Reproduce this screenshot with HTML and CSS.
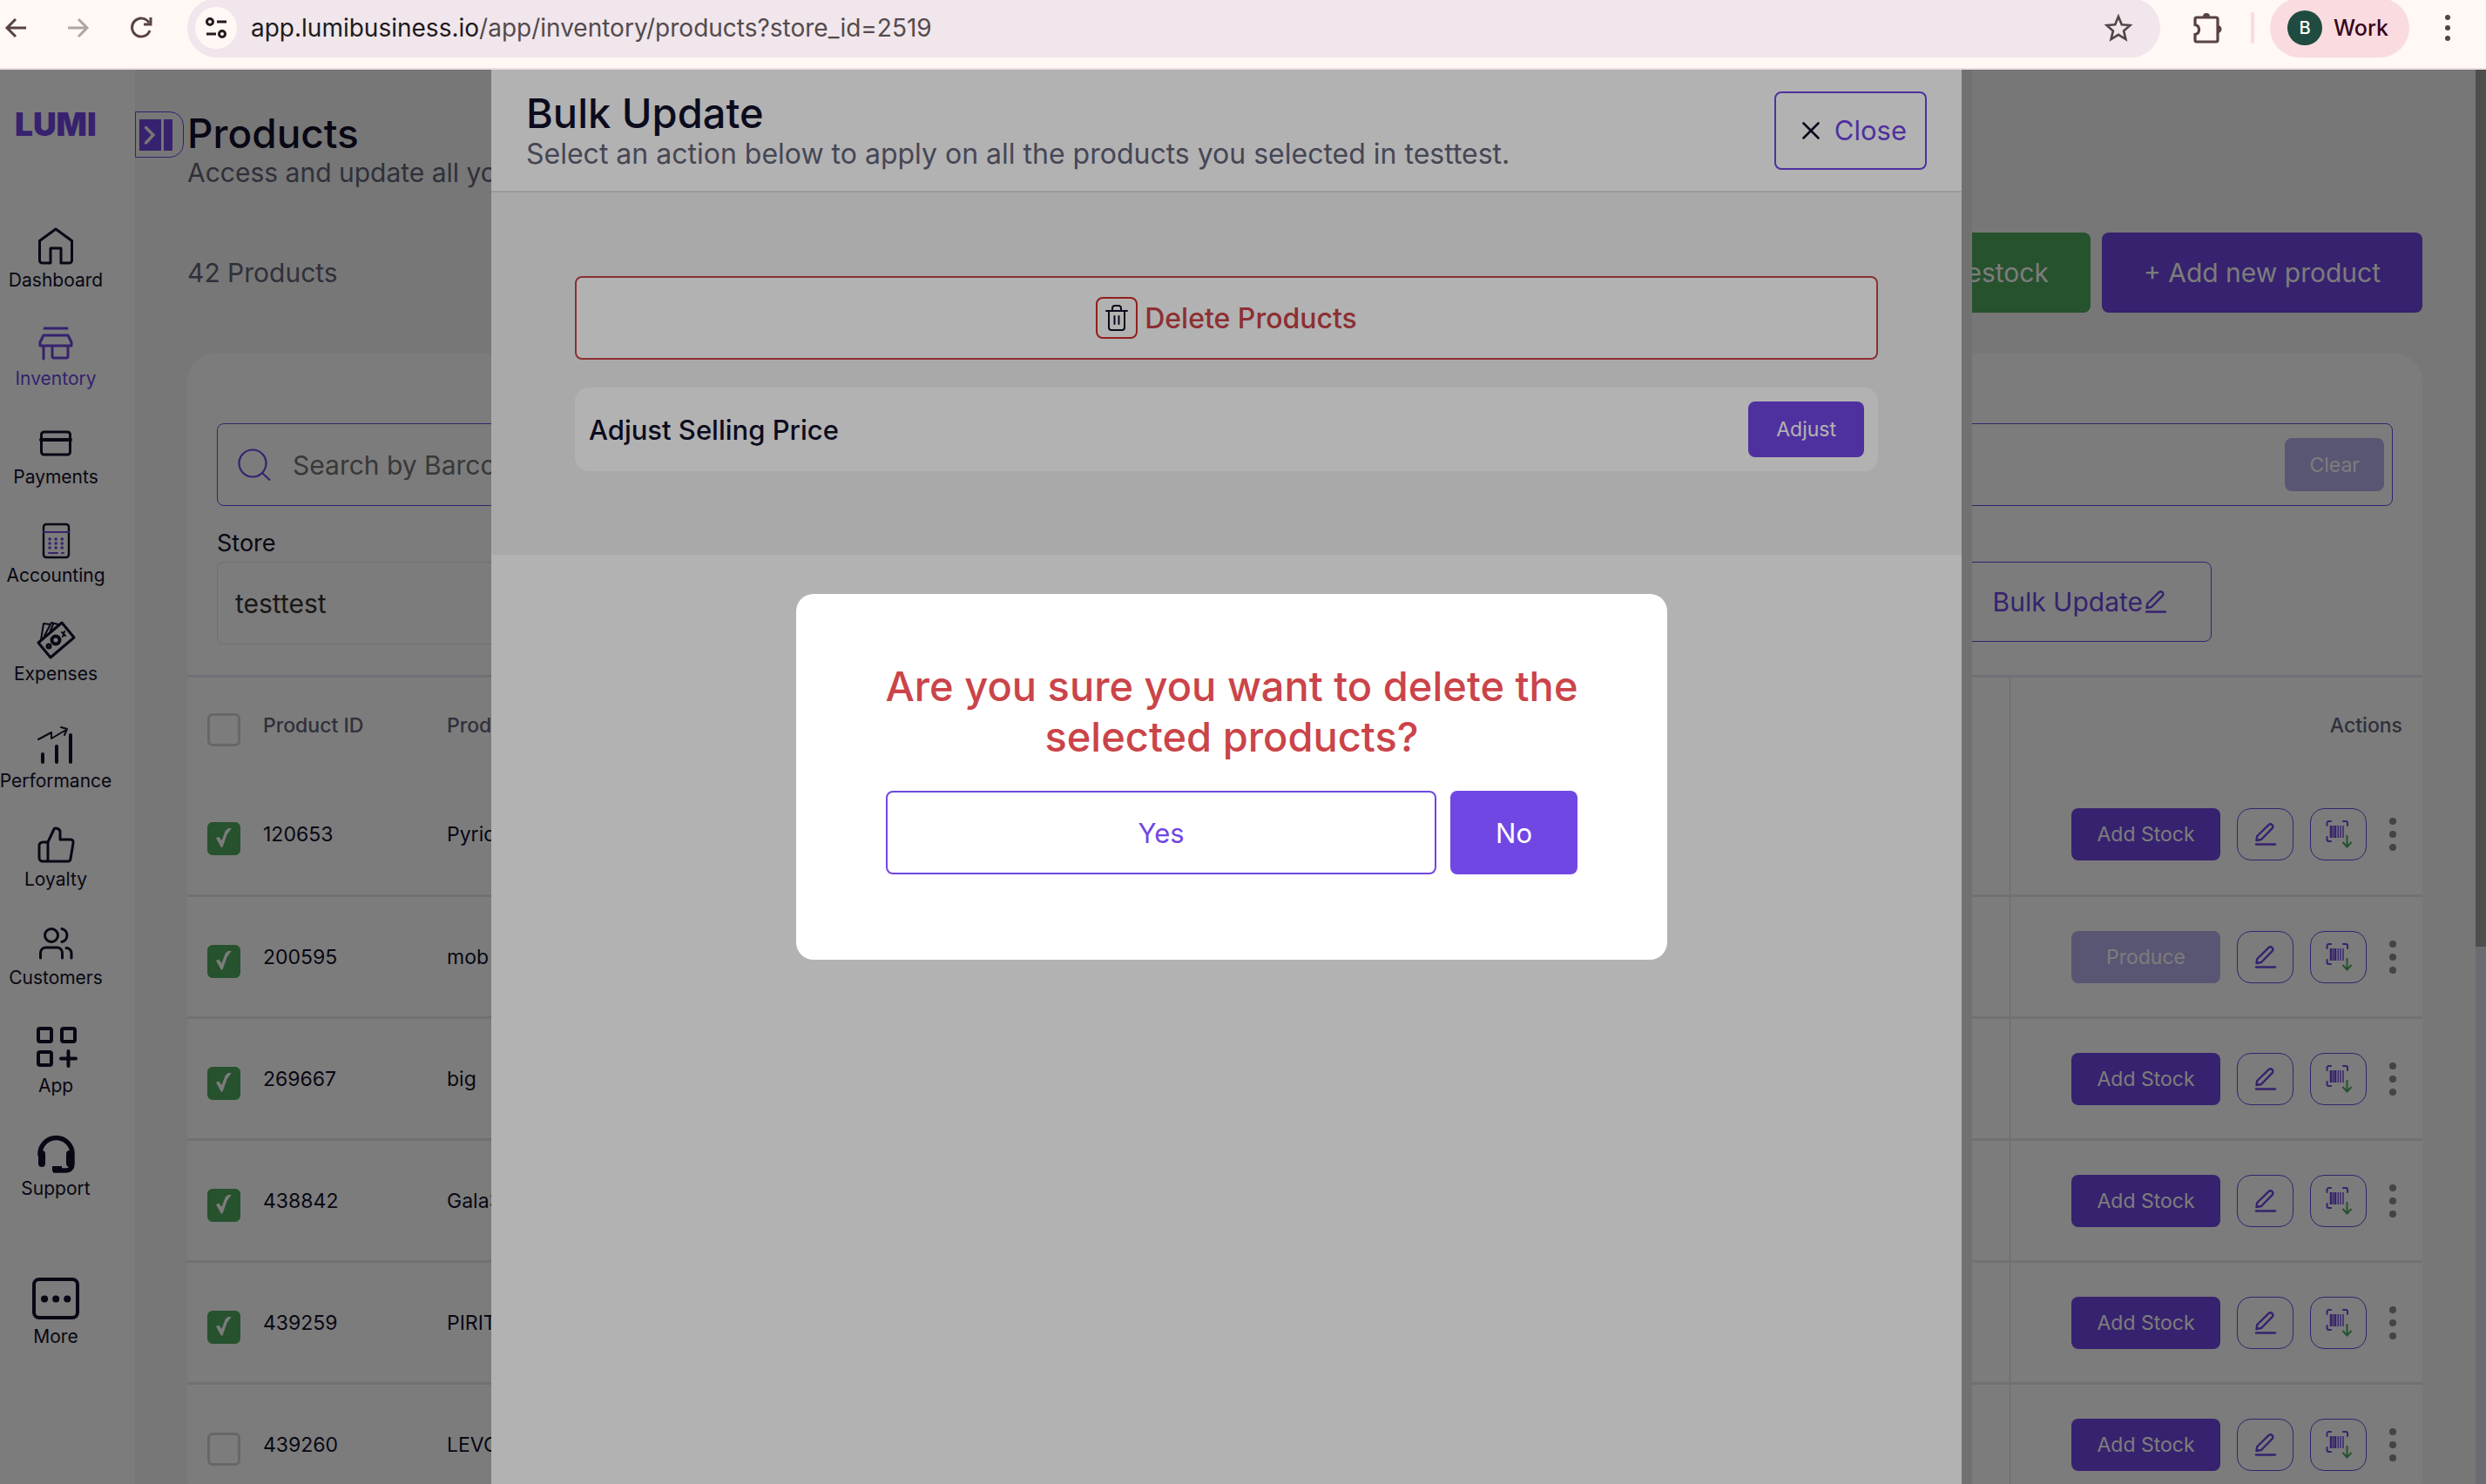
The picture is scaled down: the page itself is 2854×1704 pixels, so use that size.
FILE: index.html
```html
<!DOCTYPE html>
<html lang="en">
<head>
  <meta charset="UTF-8" />
  <meta name="viewport" content="width=device-width, initial-scale=1.0"/>
  <title>Lumi Business - Products</title>
  <link rel="stylesheet" href="styles.css">
</head>
<body>

  <!-- shared icons -->
  <svg class="sprite" aria-hidden="true">
    <symbol id="i-pen" viewBox="0 0 26 26">
      <g fill="none" stroke="currentColor" stroke-width="2.4" stroke-linecap="round" stroke-linejoin="round">
        <path d="M2.500 20l.8-5L16.500 2.200c1.200-1.200 2.800-1.200 4 0s1.200 2.800 0 4L8 19z"/>
        <path d="M2 24.500h22"/>
      </g>
    </symbol>
    <symbol id="i-barcode" viewBox="0 0 30 32">
      <g fill="none" stroke="currentColor" stroke-width="2" stroke-linecap="round">
        <path d="M1.500 6V3a2 2 0 0 1 2-2H6M20 1h3a2 2 0 0 1 2 2v3M1.500 19v3a2 2 0 0 0 2 2H6"/>
      </g>
      <path d="M6 6v14M11 6v14" fill="none" stroke="currentColor" stroke-width="2.600"/>
      <path d="M8.500 6v14M14.300 6v14M17 6v14M20 6v14" fill="none" stroke="currentColor" stroke-width="1.400"/>
      <path d="M24.500 17v13M19.500 25l5 5.500 5-5.500" fill="none" stroke="#4fa95f" stroke-width="2"/>
    </symbol>
    <symbol id="i-dots" viewBox="0 0 10 38">
      <circle cx="5" cy="4" r="4"/><circle cx="5" cy="19" r="4"/><circle cx="5" cy="34" r="4"/>
    </symbol>
  </svg>

  <header class="toolbar">
    <div class="nav-btns">
      <button aria-label="Back"><svg width="26" height="26" viewBox="0 0 26 26"><path d="M25 13H3M13 3L3 13l10 10"/></svg></button>
      <button class="off" aria-label="Forward"><svg width="26" height="26" viewBox="0 0 26 26"><path d="M1 13h22M13 3l10 10-10 10"/></svg></button>
      <button aria-label="Reload"><svg width="26" height="26" viewBox="0 0 26 26"><path d="M23 16a10.500 10.500 0 1 1-1-9M24 1v8h-8"/></svg></button>
    </div>
    <div class="address">
      <span class="site-info">
        <svg width="26" height="26" viewBox="0 0 26 26"><g fill="none" stroke="#241a1c" stroke-width="3"><circle cx="6" cy="6" r="3.500"/><path d="M14 6h11M2 20h11"/><circle cx="20" cy="20" r="3.500"/></g></svg>
      </span>
      <span class="url"><b>app.lumibusiness.io</b>/app/inventory/products?store_id=2519</span>
      <svg class="star" width="32" height="32" viewBox="0 0 32 32"><path d="M16 3l3.800 9.200 9.700.8-7.400 6.400 2.300 9.600L16 23.800 7.600 29l2.300-9.600L2.500 13l9.700-.8z" fill="none" stroke="#4f4548" stroke-width="2.600"/></svg>
    </div>
    <svg class="puzzle" width="34" height="36" viewBox="0 0 34 36"><path d="M5 6h22a2 2 0 0 1 2 2v24a2 2 0 0 1-2 2H5a2 2 0 0 1-2-2v-6.500a5.600 5.600 0 0 0 0-11V8a2 2 0 0 1 2-2z" fill="none" stroke="#584145" stroke-width="3.200"/><path d="M12 5a4 4 0 0 1 8 0zM29 15a4.500 4.500 0 0 1 0 9z" fill="#584145"/></svg>
    <span class="bar-line"></span>
    <button class="profile"><span class="avatar">B</span>Work</button>
    <button class="menu" aria-label="Menu"><svg width="6" height="32" viewBox="0 0 6 32"><circle cx="3" cy="4" r="3"/><circle cx="3" cy="16" r="3"/><circle cx="3" cy="28" r="3"/></svg></button>
  </header>

  <div class="viewport">
    <div class="app">

      <nav class="sidebar">
        <div class="logo">LUMI</div>
        <a href="#">
          <svg width="48" height="48" viewBox="0 0 48 48"><path d="M5.500 18.500L24 5l18.500 13.500V41a3 3 0 0 1-3 3H30V27H18v17H8.500a3 3 0 0 1-3-3z"/></svg>
          Dashboard
        </a>
        <a href="#" class="active">
          <svg width="48" height="48" viewBox="0 0 48 48"><path d="M11 6h26M10 14h28l4 8v4H6v-4zM10 26v15M20 26v12a2 2 0 0 0 2 2h14a2 2 0 0 0 2-2V26"/></svg>
          Inventory
        </a>
        <a href="#">
          <svg width="48" height="48" viewBox="0 0 48 48"><rect x="7.500" y="12" width="33" height="26" rx="3"/><path d="M7 21h34" stroke-width="4"/></svg>
          Payments
        </a>
        <a href="#">
          <svg width="48" height="48" viewBox="0 0 48 48"><rect x="10" y="5" width="29" height="38" rx="3" stroke-width="2.400"/><g class="violet"><path d="M10 14h29" stroke-width="2"/><path d="M17 22h17M17 27h17M17 32h17" stroke-width="3.400" stroke-dasharray="0.1 7"/><path d="M16 38h10M31 38h2" stroke-width="2"/></g></svg>
          Accounting
        </a>
        <a href="#">
          <svg width="48" height="48" viewBox="0 0 48 48"><path d="M4 28L31 5l14 17-27 23z" /><path d="M7 25L10 6l8 1M11 20l8-15 8 2M18 14l3-7" stroke-width="2"/><circle cx="24" cy="25" r="4.500" stroke-width="4"/><circle cx="16" cy="32" r="2" stroke-width="3"/><path d="M31 16l4 4M34 15l-2 6" stroke-width="2"/></svg>
          Expenses
        </a>
        <a href="#" class="tall">
          <svg width="48" height="48" viewBox="0 0 48 48"><path d="M9 33v9M25 24v18M41 11v31" stroke-width="4"/><path d="M4 16l15-8v7l17-10M30 2l7 2-3 7" stroke-width="2"/></svg>
          Performance
        </a>
        <a href="#">
          <svg width="48" height="48" viewBox="0 0 48 48"><path d="M15 21L22 6c1-2 8-1 7 5v7h12a3 3 0 0 1 3 4l-3 18a3 3 0 0 1-3 3H9a4 4 0 0 1-4-4V25a4 4 0 0 1 4-4zM15 21v22"/></svg>
          Loyalty
        </a>
        <a href="#">
          <svg width="48" height="48" viewBox="0 0 48 48"><circle cx="19" cy="15" r="7.500"/><path d="M6.500 41v-6a6 6 0 0 1 6-6h13a6 6 0 0 1 6 6v6M31 7.500a7.700 7.700 0 0 1 0 15M36 29.500a6 6 0 0 1 6 6V41"/></svg>
          Customers
        </a>
        <a href="#" class="low">
          <svg width="54" height="54" viewBox="0 0 54 54"><g stroke-width="4"><rect x="7" y="4" width="15" height="15" rx="2"/><rect x="34" y="4" width="15" height="15" rx="2"/><rect x="7" y="31" width="15" height="15" rx="2"/><path d="M41.500 30v17M33 38.500h17"/></g></svg>
          App
        </a>
        <a href="#" class="low">
          <svg width="48" height="48" viewBox="0 0 48 48"><path d="M6 26v-2a18.500 18.500 0 0 1 37 0v12a7 7 0 0 1-7 7H21" stroke-width="5.500" stroke-linecap="butt"/><path d="M8 24v11M40 24v11" stroke-width="8"/><path d="M20 41h11" stroke-width="6" stroke-linecap="butt"/></svg>
          Support
        </a>
        <a href="#" class="more">
          <svg width="54" height="54" viewBox="0 0 54 54"><rect x="2" y="4" width="50" height="44" rx="6" stroke-width="4"/><path d="M14 26.500h27" stroke-width="8" stroke-dasharray="0.100 13"/></svg>
          More
        </a>
      </nav>

      <main class="page">
        <div class="page-head">
          <button class="toggle" aria-label="Expand sidebar"><svg width="38" height="36" viewBox="0 0 38 36"><path d="M0 0h25v36H0zM28 0h10v36H28z" fill="#7047e3"/><path d="M7.500 9.500L16 18l-8.500 9" fill="none" stroke="#f5f5f5" stroke-width="3.400" stroke-linecap="round"/></svg></button>
          <div>
            <h1>Products</h1>
            <p>Access and update all your products</p>
          </div>
        </div>

        <div class="page-body">
          <div class="summary">
            <span>42 Products</span>
            <button class="btn green">Restock</button>
            <button class="btn">+ Add new product</button>
          </div>

          <section class="card">
            <div class="filters">
              <div class="search">
                <svg width="38" height="38" viewBox="0 0 38 38"><g fill="none" stroke="#7047e3" stroke-width="2.200"><circle cx="17" cy="17" r="15.500"/><path d="M28 28l9 8.500"/></g></svg>
                <input type="text" aria-label="Search products" placeholder="Search by Barcode, Name or Product ID">
                <button class="btn small faded">Clear</button>
              </div>
              <label for="store">Store</label>
              <div class="filter-row">
                <select id="store"><option>testtest</option></select>
                <button class="btn outline thin">Bulk Update<svg width="26" height="26"><use href="#i-pen"/></svg></button>
              </div>
            </div>

            <table>
              <thead>
                <tr>
                  <th class="col-check"><input type="checkbox" aria-label="Select all"></th>
                  <th class="col-id">Product ID</th>
                  <th>Product Name</th>
                  <th class="col-actions">Actions</th>
                </tr>
              </thead>
              <tbody>
                <tr>
                  <td class="col-check"><input type="checkbox" aria-label="Select 120653" checked></td>
                  <td>120653</td>
                  <td>Pyridoxine</td>
                  <td class="col-actions"><div class="actions">
                    <button class="btn small">Add Stock</button>
                    <button class="icon-btn" aria-label="Edit"><svg width="26" height="26"><use href="#i-pen"/></svg></button>
                    <button class="icon-btn" aria-label="Barcode"><svg width="30" height="32"><use href="#i-barcode"/></svg></button>
                    <button class="dots" aria-label="More"><svg width="10" height="38"><use href="#i-dots"/></svg></button>
                  </div></td>
                </tr>
                <tr>
                  <td class="col-check"><input type="checkbox" aria-label="Select 200595" checked></td>
                  <td>200595</td>
                  <td>mob</td>
                  <td class="col-actions"><div class="actions">
                    <button class="btn small faded">Produce</button>
                    <button class="icon-btn" aria-label="Edit"><svg width="26" height="26"><use href="#i-pen"/></svg></button>
                    <button class="icon-btn" aria-label="Barcode"><svg width="30" height="32"><use href="#i-barcode"/></svg></button>
                    <button class="dots" aria-label="More"><svg width="10" height="38"><use href="#i-dots"/></svg></button>
                  </div></td>
                </tr>
                <tr>
                  <td class="col-check"><input type="checkbox" aria-label="Select 269667" checked></td>
                  <td>269667</td>
                  <td>big</td>
                  <td class="col-actions"><div class="actions">
                    <button class="btn small">Add Stock</button>
                    <button class="icon-btn" aria-label="Edit"><svg width="26" height="26"><use href="#i-pen"/></svg></button>
                    <button class="icon-btn" aria-label="Barcode"><svg width="30" height="32"><use href="#i-barcode"/></svg></button>
                    <button class="dots" aria-label="More"><svg width="10" height="38"><use href="#i-dots"/></svg></button>
                  </div></td>
                </tr>
                <tr>
                  <td class="col-check"><input type="checkbox" aria-label="Select 438842" checked></td>
                  <td>438842</td>
                  <td>Gala3</td>
                  <td class="col-actions"><div class="actions">
                    <button class="btn small">Add Stock</button>
                    <button class="icon-btn" aria-label="Edit"><svg width="26" height="26"><use href="#i-pen"/></svg></button>
                    <button class="icon-btn" aria-label="Barcode"><svg width="30" height="32"><use href="#i-barcode"/></svg></button>
                    <button class="dots" aria-label="More"><svg width="10" height="38"><use href="#i-dots"/></svg></button>
                  </div></td>
                </tr>
                <tr>
                  <td class="col-check"><input type="checkbox" aria-label="Select 439259" checked></td>
                  <td>439259</td>
                  <td>PIRITON</td>
                  <td class="col-actions"><div class="actions">
                    <button class="btn small">Add Stock</button>
                    <button class="icon-btn" aria-label="Edit"><svg width="26" height="26"><use href="#i-pen"/></svg></button>
                    <button class="icon-btn" aria-label="Barcode"><svg width="30" height="32"><use href="#i-barcode"/></svg></button>
                    <button class="dots" aria-label="More"><svg width="10" height="38"><use href="#i-dots"/></svg></button>
                  </div></td>
                </tr>
                <tr>
                  <td class="col-check"><input type="checkbox" aria-label="Select 439260"></td>
                  <td>439260</td>
                  <td>LEVOTHYROXINE</td>
                  <td class="col-actions"><div class="actions">
                    <button class="btn small">Add Stock</button>
                    <button class="icon-btn" aria-label="Edit"><svg width="26" height="26"><use href="#i-pen"/></svg></button>
                    <button class="icon-btn" aria-label="Barcode"><svg width="30" height="32"><use href="#i-barcode"/></svg></button>
                    <button class="dots" aria-label="More"><svg width="10" height="38"><use href="#i-dots"/></svg></button>
                  </div></td>
                </tr>
              </tbody>
            </table>
          </section>
        </div>
      </main>

      <div class="scrollbar"><div class="thumb"></div></div>
    </div>

    <div class="overlay">
      <div class="drawer">
        <div class="drawer-main">
          <div class="drawer-head">
            <div>
              <h2>Bulk Update</h2>
              <p>Select an action below to apply on all the products you selected in testtest.</p>
            </div>
            <button class="btn outline close"><svg width="20" height="20" viewBox="0 0 20 20"><path d="M1.500 1.500l17 17M18.500 1.500l-17 17" stroke="#12102b" stroke-width="2.600" stroke-linecap="round"/></svg>Close</button>
          </div>
          <div class="drawer-body">
            <button class="btn delete">
              <span class="trash"><svg width="26" height="30" viewBox="0 0 26 30"><g fill="none" stroke="#12102b" stroke-width="2" stroke-linecap="round" stroke-linejoin="round"><path d="M1 7h24M4 7v19a3 3 0 0 0 3 3h12a3 3 0 0 0 3-3V7M8 6V4a3 3 0 0 1 3-3h4a3 3 0 0 1 3 3v2M10.500 13v9M15.500 13v9"/></g></svg></span>
              Delete Products
            </button>
            <div class="adjust">
              <span>Adjust Selling Price</span>
              <button class="btn small">Adjust</button>
            </div>
          </div>
        </div>
        <div class="drawer-scroll"></div>
      </div>
    </div>

    <div class="overlay center">
      <div class="confirm" role="dialog" aria-labelledby="confirmTitle">
        <h2 id="confirmTitle">Are you sure you want to delete the selected products?</h2>
        <div class="confirm-btns">
          <button class="btn outline yes">Yes</button>
          <button class="btn">No</button>
        </div>
      </div>
    </div>
  </div>

</body>
</html>
```
FILE: styles.css
```css
* {
  box-sizing: border-box;
}

body {
  margin: 0;
  height: 100vh;
  display: flex;
  flex-direction: column;
  overflow: hidden;
  font-family: Inter, "Liberation Sans", sans-serif;
  font-size: 30px;
  color: #12102b;
}

h1, h2, p {
  margin: 0;
}

h1, h2 {
  font-size: 47px;
  font-weight: 500;
  line-height: 58px;
}

p {
  line-height: 40px;
  color: #65657a;
}

button {
  padding: 0;
  border: none;
  background: none;
  font: inherit;
  color: inherit;
  cursor: pointer;
}

svg {
  display: block;
  flex: none;
}

.sprite {
  position: absolute;
  width: 0;
  height: 0;
}

/* browser bar */
.toolbar {
  flex: none;
  display: flex;
  align-items: center;
  height: 80px;
  padding: 0 41px 14px 5px;
  border-bottom: 2px solid #f3dde0;
  background: #fff8f5;
  font-size: 28px;
}

.nav-btns {
  display: flex;
  gap: 46px;
  width: 210px;
}

.nav-btns path {
  fill: none;
  stroke: #584145;
  stroke-width: 3;
}

.nav-btns .off path {
  stroke: #b0a5a5;
}

.address {
  flex: 1;
  display: flex;
  align-items: center;
  height: 68px;
  padding: 0 32px 0 9px;
  border-radius: 34px;
  background: #f0e6eb;
}

.site-info {
  display: flex;
  align-items: center;
  justify-content: center;
  width: 48px;
  height: 48px;
  margin-right: 16px;
  border-radius: 50%;
  background: #fff8f5;
}

.url {
  flex: 1;
  color: #544a4d;
}

.url b {
  font-weight: 400;
  color: #201a1b;
}

.puzzle {
  margin-left: 37px;
}

.bar-line {
  width: 4px;
  height: 36px;
  margin: 0 18px 0 33px;
  border-radius: 2px;
  background: #f9dbe0;
}

.profile {
  display: flex;
  align-items: center;
  gap: 13px;
  height: 68px;
  padding: 0 24px 0 20px;
  border-radius: 34px;
  background: #f9dbe0;
  color: #35061a;
  font-weight: 500;
  font-size: 25px;
}

.avatar {
  width: 40px;
  height: 40px;
  border-radius: 50%;
  background: #1f4b40;
  color: #fff;
  font-size: 20px;
  line-height: 40px;
}

.menu {
  margin-left: 41px;
  fill: #584145;
}

/* app */
.viewport {
  position: relative;
  flex: 1;
  min-height: 0;
  overflow: hidden;
}

.app {
  display: flex;
  height: 100%;
  overflow: hidden;
  background: #f5f5f5;
}

.sidebar {
  flex: none;
  display: flex;
  flex-direction: column;
  gap: 35px;
  width: 155px;
  padding: 43px 27px 0 0;
  background: #fff;
  font-size: 21px;
  line-height: 28px;
}

.logo {
  height: 100px;
  padding-left: 17px;
  color: #7047e3;
  font-size: 37px;
  font-weight: 900;
  line-height: 40px;
}

.sidebar a {
  display: flex;
  flex-direction: column;
  align-items: center;
  gap: 2px;
  color: #12102b;
  text-decoration: none;
}

.sidebar .active {
  color: #7047e3;
}

.sidebar svg {
  fill: none;
  stroke: currentColor;
  stroke-width: 3;
  stroke-linecap: round;
  stroke-linejoin: round;
}

.violet {
  stroke: #7047e3;
}

.sidebar .tall {
  margin-top: 10px;
}

.sidebar .low {
  margin-top: 5px;
}

.sidebar .more {
  margin-top: 51px;
}

.page {
  flex: 1;
  min-width: 0;
}

.page-head {
  display: flex;
  align-items: flex-start;
  gap: 4px;
  padding-top: 48px;
}

.page-head h1 {
  font-size: 46px;
  line-height: 50px;
}

.toggle {
  width: 56px;
  height: 53px;
  padding-left: 4px;
  border: 1px solid #7047e3;
  border-radius: 0 16px 16px 0;
}

.page-body {
  padding: 49px 61px 0 60px;
}

.summary {
  display: flex;
  align-items: center;
  gap: 13px;
  margin-bottom: 47px;
}

.summary span {
  flex: 1;
  color: #65657a;
}

.btn {
  height: 92px;
  padding: 0 48px;
  border-radius: 8px;
  background: #7047e3;
  color: #fff;
  font-size: 30px;
}

.btn.green {
  background: #4fa95f;
}

.btn.outline {
  border: 2px solid #7047e3;
  background: none;
  color: #7047e3;
}

.btn.thin {
  display: flex;
  align-items: center;
  gap: 2px;
  padding: 0 50px;
  border-width: 1px;
}

.btn.small {
  height: 64px;
  padding: 0 32px;
  font-size: 23px;
}

.btn.faded {
  background: #b8b0ef;
}

.card {
  border-radius: 32px;
  background: #fff;
}

.filters {
  padding: 80px 34px 35px;
}

.search {
  display: flex;
  align-items: center;
  gap: 25px;
  height: 95px;
  padding: 0 9px 0 23px;
  border: 1px solid #7047e3;
  border-radius: 8px;
}

.search input {
  flex: 1;
  padding: 0;
  border: none;
  outline: none;
  background: none;
  font: inherit;
}

.search input::placeholder {
  color: #757575;
}

.search .btn {
  height: 61px;
  padding: 0 28px;
}

.filters label {
  display: block;
  padding: 25px 0 3px;
  font-size: 27px;
  line-height: 36px;
}

.filter-row {
  display: flex;
  gap: 24px;
  align-items: flex-start;
}

.filter-row select {
  flex: 1;
  height: 95px;
  padding: 0 20px;
  border: 1px solid #e2e2e2;
  border-radius: 8px;
  background: none;
  color: #333;
  font: inherit;
  appearance: none;
}

.filter-row .btn {
  margin-right: 208px;
}

table {
  width: 100%;
  border-collapse: collapse;
  border-top: 3px solid #e5e9f3;
  font-size: 23px;
  text-align: left;
}

th {
  height: 112px;
  padding: 0;
  color: #65657a;
  font-weight: 500;
}

td {
  height: 140px;
  padding: 0;
  border-bottom: 3px solid #e5e9f0;
}

.col-check {
  width: 87px;
  padding: 10px 0 0 23px;
}

.col-id {
  width: 211px;
}

.col-actions {
  width: 474px;
  padding-right: 23px;
  border-left: 1px solid #d8d8d8;
  text-align: right;
}

input[type="checkbox"] {
  display: block;
  width: 38px;
  height: 38px;
  margin: 0;
  border: 3px solid #d4d4d4;
  border-radius: 6px;
  appearance: none;
}

input[type="checkbox"]:checked {
  border-color: #4fa95f;
  background: #4fa95f;
}

input[type="checkbox"]:checked::before {
  content: "";
  display: block;
  width: 18px;
  height: 22px;
  margin: 4px 0 0 7px;
  background: #fff;
  clip-path: polygon(0 52%, 18% 46%, 36% 66%, 60% 14%, 80% 0, 100% 0, 70% 34%, 42% 100%, 32% 100%);
}

.actions {
  display: flex;
  align-items: center;
  justify-content: flex-end;
  gap: 19px;
  padding-right: 6px;
}

.actions .btn {
  width: 171px;
  height: 60px;
  padding: 0;
}

.icon-btn {
  display: flex;
  align-items: center;
  justify-content: center;
  width: 65px;
  height: 60px;
  border: 1px solid #7047e3;
  border-radius: 16px;
  color: #7047e3;
}

.dots {
  padding-left: 6px;
  fill: #8a8a95;
}

.scrollbar {
  flex: none;
  width: 12px;
  background: #dfdde8;
}

.thumb {
  height: 62%;
  background: #a1a1a1;
}

/* drawer and dialog */
.overlay {
  position: absolute;
  inset: 0;
  display: flex;
  justify-content: center;
  padding-right: 26px;
  background: rgba(0, 0, 0, 0.3);
}

.overlay.center {
  align-items: center;
}

.drawer {
  display: flex;
  width: 1700px;
  max-width: 100%;
  background: #fff;
}

.drawer-main {
  flex: 1;
}

.drawer-scroll {
  width: 12px;
  background: #a3a3a3;
}

.drawer-head {
  display: flex;
  align-items: center;
  justify-content: space-between;
  height: 141px;
  padding: 0 40px;
  border-bottom: 2px solid #dcdcdc;
}

.drawer-head h2 {
  line-height: 54px;
}

.drawer-head p {
  font-size: 32px;
}

.btn.close {
  display: flex;
  align-items: center;
  gap: 17px;
  height: 90px;
  padding: 0 21px 0 30px;
  font-size: 31px;
}

.drawer-body {
  display: flex;
  flex-direction: column;
  gap: 32px;
  padding: 96px;
  background: #f2f2f2;
}

.btn.delete {
  display: flex;
  align-items: center;
  justify-content: center;
  gap: 8px;
  height: 96px;
  border: 2px solid #ca4449;
  background: #fff;
  color: #ca4449;
  font-size: 32px;
  font-weight: 500;
}

.trash {
  display: flex;
  align-items: center;
  justify-content: center;
  width: 48px;
  height: 48px;
  border: 2px solid #d32d28;
  border-radius: 8px;
}

.adjust {
  display: flex;
  align-items: center;
  justify-content: space-between;
  height: 96px;
  padding: 0 16px;
  border-radius: 16px;
  background: #fff;
  font-size: 31px;
  font-weight: 500;
}

.adjust .btn {
  font-weight: 400;
}

.confirm {
  width: 1000px;
  max-width: 100%;
  padding: 77px 90px 98px;
  border-radius: 20px;
  background: #fff;
}

.confirm h2 {
  color: #ca4449;
  text-align: center;
}

.confirm-btns {
  display: flex;
  gap: 16px;
  padding: 33px 13px 0;
}

.confirm-btns .btn {
  height: 96px;
  padding: 0 52px;
  font-size: 31px;
}

.confirm-btns .yes {
  flex: 1;
}
```
